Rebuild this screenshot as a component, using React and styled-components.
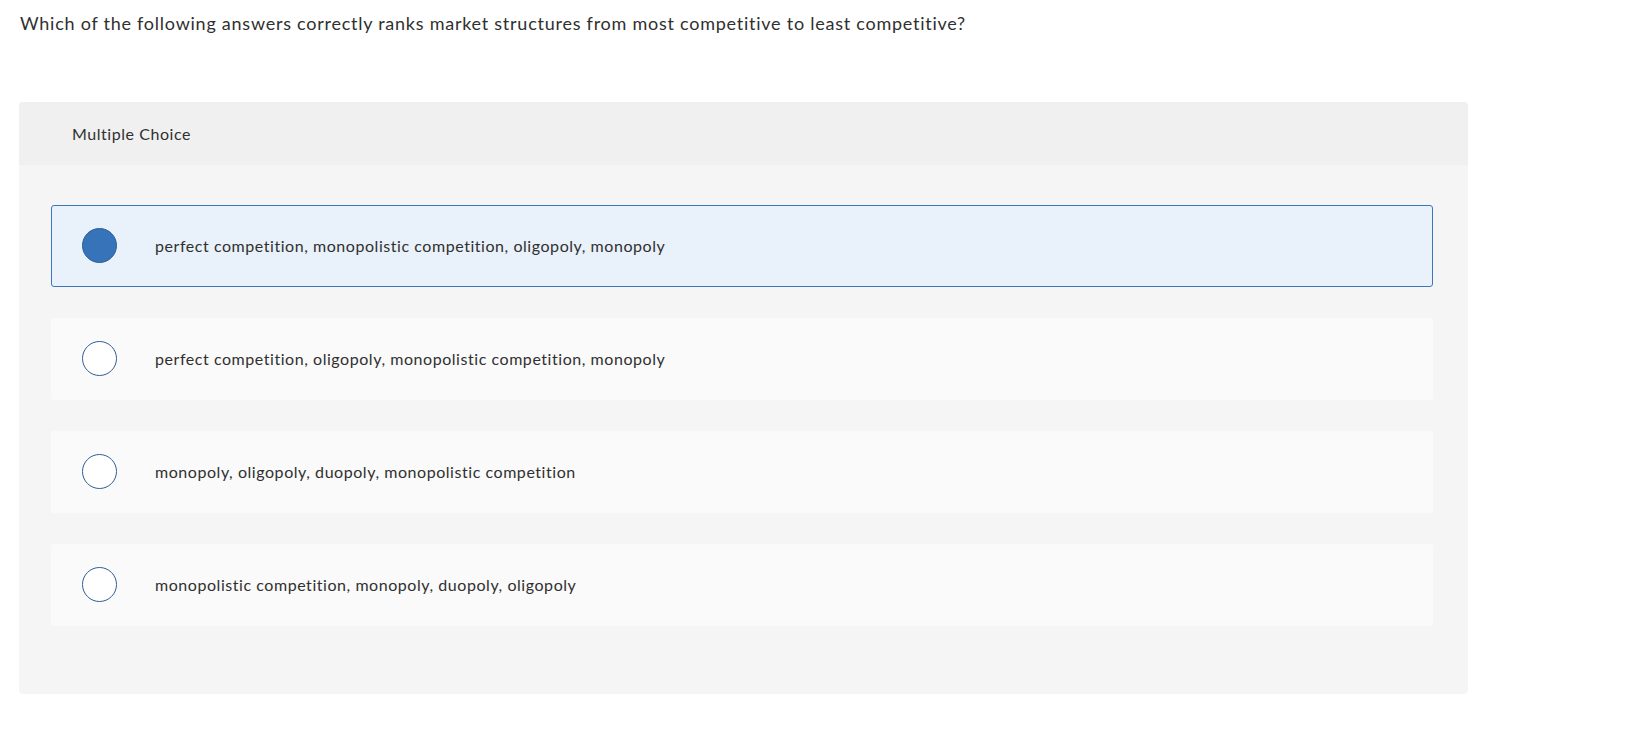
import React, { useState } from 'react';
import styled, { createGlobalStyle } from 'styled-components';

const GlobalStyle = createGlobalStyle`
  body {
    margin: 0;
    background: #ffffff;
    font-family: Lato, "Liberation Sans", sans-serif;
    color: #303030;
  }
`;

const choices = [
  'perfect competition, monopolistic competition, oligopoly, monopoly',
  'perfect competition, oligopoly, monopolistic competition, monopoly',
  'monopoly, oligopoly, duopoly, monopolistic competition',
  'monopolistic competition, monopoly, duopoly, oligopoly',
];

const App = () => {
  const [selected, setSelected] = useState(0);

  return (
    <>
      <GlobalStyle />
      <Page>
        <Question>
          Which of the following answers correctly ranks market structures from most competitive to least competitive?
        </Question>
        <Panel>
          <PanelHeader>Multiple Choice</PanelHeader>
          <ChoiceList>
            {choices.map((text, index) => (
              <Choice
                key={index}
                $active={selected === index}
                onClick={() => setSelected(index)}
              >
                <Radio $active={selected === index} />
                <ChoiceText>{text}</ChoiceText>
              </Choice>
            ))}
          </ChoiceList>
        </Panel>
      </Page>
    </>
  );
};

const Page = styled.div`
  padding: 13px 0 40px 19px;
  width: 1449px;
`;

const Question = styled.p`
  margin: 0 0 0 1px;
  font-size: 18px;
  line-height: 1.2;
  letter-spacing: 0.75px;
`;

const Panel = styled.section`
  margin-top: 67px;
  border-radius: 4px;
  overflow: hidden;
  background: #f5f5f5;
`;

const PanelHeader = styled.div`
  display: flex;
  align-items: center;
  height: 63px;
  padding-left: 53px;
  background: #f0f0f0;
  font-size: 16px;
  line-height: 1.2;
  letter-spacing: 0.55px;
`;

const ChoiceList = styled.div`
  display: flex;
  flex-direction: column;
  gap: 31px;
  padding: 40px 35px 68px 32px;
`;

const Choice = styled.div`
  display: flex;
  align-items: center;
  gap: 38px;
  box-sizing: border-box;
  height: 82px;
  padding-left: 30px;
  border: 1px solid ${(p) => (p.$active ? '#3a77c0' : 'transparent')};
  border-radius: 3px;
  background: ${(p) => (p.$active ? '#e9f1fa' : '#fafafa')};
  cursor: pointer;
`;

const Radio = styled.span`
  flex: none;
  box-sizing: border-box;
  width: 35px;
  height: 35px;
  border-radius: 50%;
  border: 1px solid ${(p) => (p.$active ? '#2c5f9c' : '#2f5f96')};
  background: ${(p) => (p.$active ? '#3673b8' : '#ffffff')};
`;

const ChoiceText = styled.span`
  font-size: 16px;
  line-height: 1.2;
  letter-spacing: 0.55px;
`;

export default App;
